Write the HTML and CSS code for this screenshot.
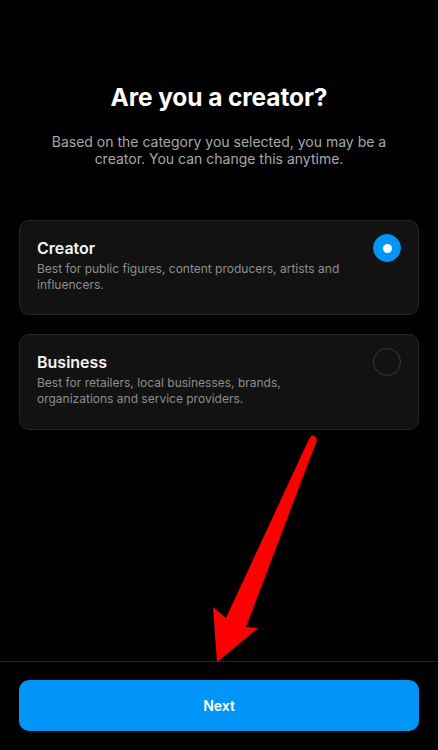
FILE: index.html
```html
<!DOCTYPE html>
<html>
<head>
<meta charset="utf-8">
<link rel="stylesheet" href="styles.css">
</head>
<body>
<div class="page">
  <div class="content">
    <h1 class="title">Are you a creator?</h1>
    <p class="subtitle">Based on the category you selected, you may be a creator. You can change this anytime.</p>
    <div class="options">
      <div class="card">
        <div class="card-text">
          <div class="card-title">Creator</div>
          <div class="card-desc">Best for public figures, content producers, artists and influencers.</div>
        </div>
        <div class="radio radio-on"><span class="dot"></span></div>
      </div>
      <div class="card">
        <div class="card-text">
          <div class="card-title">Business</div>
          <div class="card-desc">Best for retailers, local businesses, brands, organizations and service providers.</div>
        </div>
        <div class="radio"></div>
      </div>
    </div>
  </div>
  <div class="footer">
    <button class="next">Next</button>
  </div>
  <svg class="arrow" width="438" height="750" viewBox="0 0 438 750">
    <polygon points="309,439 312,435 316,437 317,440 246,627 258,628 217,662 213,607 226,618" fill="#ff0000"/>
  </svg>
</div>
</body>
</html>
```
FILE: styles.css
```css
* { box-sizing: border-box; }
html, body { margin: 0; padding: 0; background: #000; }
body { font-family: Inter, "Noto Sans", "Liberation Sans", sans-serif; color: #fff; }
.page {
  position: relative;
  width: 438px;
  height: 750px;
  display: flex;
  flex-direction: column;
  overflow: hidden;
}
.content {
  flex: 1;
  padding: 82px 19px 0;
}
.title {
  margin: 0;
  text-align: center;
  font-size: 24.5px;
  line-height: 30px;
  font-weight: 700;
  letter-spacing: -0.1px;
}
.subtitle {
  margin: 21px 0 0;
  text-align: center;
  font-size: 14px;
  line-height: 17px;
  color: #a8a8a8;
  padding: 0 28px;
}
.options {
  margin-top: 53px;
  display: flex;
  flex-direction: column;
  gap: 19px;
}
.card {
  display: flex;
  align-items: flex-start;
  background: #121212;
  border: 1px solid #262626;
  border-radius: 10px;
  padding: 17px 17px 20px 17px;
  min-height: 95px;
}
.card + .card { min-height: 96px; }
.card-text {
  flex: 1;
  padding-right: 22px;
}
.card-title {
  font-size: 16px;
  line-height: 20px;
  font-weight: 600;
  color: #f5f5f5;
}
.card-desc {
  margin-top: 3px;
  font-size: 12px;
  line-height: 16px;
  color: #8e8e8e;
}
.radio {
  width: 28px;
  height: 28px;
  margin-top: -4px;
  border-radius: 50%;
  border: 1.5px solid #3a3a3a;
  flex: none;
  display: flex;
  align-items: center;
  justify-content: center;
}
.radio-on {
  background: #0095f6;
  border-color: #0095f6;
}
.dot {
  width: 9px;
  height: 9px;
  border-radius: 50%;
  background: #fff;
}
.footer {
  border-top: 1px solid #262626;
  padding: 18px 19px 19px;
}
.next {
  display: block;
  width: 100%;
  height: 51px;
  border: none;
  border-radius: 10px;
  background: #0095f6;
  color: #fff;
  font-family: Inter, "Noto Sans", "Liberation Sans", sans-serif;
  font-size: 14px;
  font-weight: 600;
}
.arrow {
  position: absolute;
  left: 0;
  top: 0;
  pointer-events: none;
}
```
